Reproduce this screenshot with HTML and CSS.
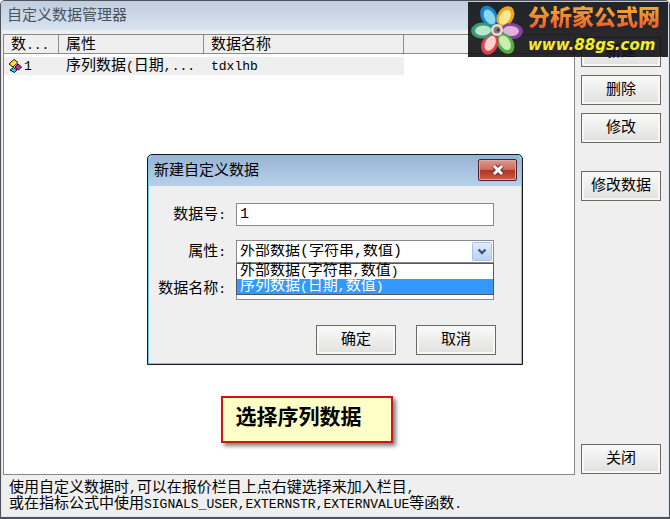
FILE: index.html
```html
<!DOCTYPE html>
<html lang="zh-CN">
<head>
  <meta charset="UTF-8" />
  <meta name="viewport" content="width=device-width, initial-scale=1.0" />
  <title>自定义数据管理器</title>
  <link rel="stylesheet" href="styles.css">
</head>
<body>
<div class="window">
  <h1 class="window-title">自定义数据管理器</h1>

  <div class="main">
    <!-- 数据列表 -->
    <div class="list">
      <table class="data-table">
        <thead>
          <tr>
            <th class="col-no">数<span class="en">...</span></th>
            <th class="col-type">属性</th>
            <th class="col-name">数据名称</th>
            <th></th>
          </tr>
        </thead>
        <tbody>
          <tr>
            <td class="cell-no">
              <svg class="row-icon" viewBox="0 0 14 14" width="14" height="14" aria-hidden="true">
                <path d="M6 0.5L10 3.5L5 8L1 5Z" fill="#f4e62c" stroke="#111"/>
                <path d="M10 5L13.500 8L10.500 11L7 8Z" fill="#e21bd0" stroke="#111"/>
                <path d="M5.500 8.500L9 11L6.500 13.500L2 11Z" fill="#22d4e8" stroke="#111"/>
              </svg>
              <span class="en">1</span>
            </td>
            <td>序列数据<span class="en">(</span>日期<span class="en">,...</span></td>
            <td><span class="en">tdxlhb</span></td>
            <td class="cell-empty"></td>
          </tr>
        </tbody>
      </table>
    </div>

    <!-- 右侧按钮 -->
    <div class="sidebar">
      <button type="button" class="btn">新建</button>
      <button type="button" class="btn">删除</button>
      <button type="button" class="btn">修改</button>
      <button type="button" class="btn btn-data">修改数据</button>
      <button type="button" class="btn btn-close">关闭</button>
    </div>
  </div>

  <p class="help">使用自定义数据时<span class="en">,</span>可以在报价栏目上点右键选择来加入栏目<span class="en">,</span><br>
  或在指标公式中使用<span class="en">SIGNALS_USER,EXTERNSTR,EXTERNVALUE</span>等函数<span class="en">.</span></p>

  <!-- 新建对话框 -->
  <form class="dialog">
    <div class="dialog-head">
      <h2 class="dialog-title">新建自定义数据</h2>
      <button type="button" class="dialog-x" aria-label="关闭">
        <svg viewBox="0 0 14 12" width="14" height="12" aria-hidden="true">
          <path d="M3 2L11 10M11 2L3 10" stroke="#5b3038" stroke-width="5"/>
          <path d="M3 2L11 10M11 2L3 10" stroke="#fff" stroke-width="3"/>
        </svg>
      </button>
    </div>
    <div class="fields">
      <label for="no">数据号<span class="en">:</span></label>
      <input id="no" class="field" type="text" value="1">

      <label for="type">属性<span class="en">:</span></label>
      <div class="combo">
        <select id="type" class="field">
          <option>外部数据(字符串,数值)</option>
          <option>序列数据(日期,数值)</option>
        </select>
        <svg class="combo-arrow" viewBox="0 0 20 19" width="20" height="19" aria-hidden="true">
          <defs>
            <linearGradient id="arrow-bg" x2="0" y2="1">
              <stop offset="0" stop-color="#e3edfc"/>
              <stop offset="1" stop-color="#b9d0f5"/>
            </linearGradient>
          </defs>
          <rect x="0.5" y="0.5" width="19" height="18" rx="1" fill="url(#arrow-bg)" stroke="#a9c1ea"/>
          <path d="M6.500 7.500L10 11L13.500 7.500" fill="none" stroke="#41566f" stroke-width="2.400"/>
        </svg>
        <ul class="combo-list" role="listbox" aria-label="属性选项">
          <li role="option">外部数据<span class="en">(</span>字符串<span class="en">,</span>数值<span class="en">)</span></li>
          <li role="option" class="active" aria-selected="true">序列数据<span class="en">(</span>日期<span class="en">,</span>数值<span class="en">)</span></li>
        </ul>
      </div>

      <label for="name">数据名称<span class="en">:</span></label>
      <input id="name" class="field" type="text">
    </div>
    <div class="actions">
      <button type="button" class="btn">确定</button>
      <button type="button" class="btn">取消</button>
    </div>
  </form>

  <div class="note">选择序列数据</div>

  <!-- 网站标志 -->
  <div class="logo">
    <svg class="flower" viewBox="0 0 54 52" width="54" height="52" aria-hidden="true">
      <g transform="translate(27 26)">
        <g transform="rotate(-30)"><ellipse cy="-16" rx="8" ry="11" fill="#1687c8"/><ellipse cy="-15" rx="5" ry="8" fill="#8cd6f2"/></g>
        <g transform="rotate(32)"><ellipse cy="-16" rx="8" ry="11" fill="#efa51c"/><ellipse cy="-15" rx="5" ry="8" fill="#fbe78d"/></g>
        <g transform="rotate(94)"><ellipse cy="-15" rx="8" ry="11" fill="#83429b"/><ellipse cy="-14" rx="5" ry="8" fill="#e0b2de"/></g>
        <g transform="rotate(148)"><ellipse cy="-16" rx="8" ry="11" fill="#54ad45"/><ellipse cy="-15" rx="5" ry="8" fill="#c9edae"/></g>
        <g transform="rotate(207)"><ellipse cy="-16" rx="8" ry="11" fill="#dd4050"/><ellipse cy="-15" rx="5" ry="8" fill="#ffd0ce"/></g>
        <g transform="rotate(268)"><ellipse cy="-15" rx="8" ry="11" fill="#3d9873"/><ellipse cy="-14" rx="5" ry="8" fill="#b6e6cb"/></g>
        <circle r="6" fill="#e8ded8"/>
        <circle r="3.500" fill="#8d7770"/>
        <circle cx="1" cy="0" r="1.500" fill="#4a3634"/>
      </g>
    </svg>
    <div class="logo-text">
      <span class="logo-name">分析家公式网</span>
      <span class="logo-url">www.88gs.com</span>
    </div>
  </div>
</div>
</body>
</html>
```
FILE: styles.css
```css
* {
  box-sizing: border-box;
}

body {
  margin: 0;
  background: #fff;
  color: #000;
  font-family: "Liberation Mono", "Noto Sans CJK SC", monospace;
  font-size: 15px;
  line-height: 15px;
}

button,
input,
select {
  font: inherit;
  color: inherit;
}

.en {
  font-size: 13px;
}

/* 主窗口 */
.window {
  position: relative;
  display: flex;
  flex-direction: column;
  min-height: 100vh;
  border: 1px solid #50535c;
  border-bottom-width: 2px;
  border-radius: 5px 5px 0 0;
  background: #efefef;
  box-shadow: inset 0 0 0 1px #dbe5f0;
}

.window-title {
  margin: 0;
  padding: 2px 6px 0;
  border-radius: 4px 4px 0 0;
  background: linear-gradient(#c0cddd, #d8e3f0);
  color: #4a525c;
  font-size: 15px;
  font-weight: normal;
  line-height: 27px;
}

.main {
  flex: 1;
  display: flex;
  gap: 6px;
  padding: 4px 8px 0 2px;
}

/* 列表 */
.list {
  flex: 1;
  border: 1px solid #85888a;
  background: #fff;
}

.data-table {
  width: 100%;
  table-layout: fixed;
  border-collapse: separate;
  border-spacing: 0;
  text-align: left;
  white-space: nowrap;
}

.data-table th {
  height: 19px;
  padding: 2px 7px 0;
  border-right: 1px solid #8d8d8d;
  border-bottom: 1px solid #8d8d8d;
  background: #efefef;
  font-weight: normal;
}

.data-table th:last-child {
  border-right: 0;
}

.data-table td {
  height: 21px;
  padding: 1px 7px 0;
  border-top: 3px solid #fff;
  background: #efefef;
}

.data-table .cell-empty {
  background: #fff;
}

.data-table .col-no {
  width: 55px;
}

.data-table .col-type {
  width: 145px;
}

.data-table .col-name {
  width: 200px;
}

.data-table .cell-no {
  display: flex;
  align-items: center;
  gap: 2px;
  padding: 0 4px;
}

/* 按钮 */
.sidebar {
  display: flex;
  flex-direction: column;
  gap: 8px;
  padding-top: 3px;
  padding-bottom: 1px;
}

.btn {
  width: 80px;
  height: 30px;
  padding: 0;
  border: 1px solid #6b6b66;
  background: linear-gradient(#fafafa, #e0e0df);
  box-shadow: inset 0 0 0 2px #f7f7f7;
}

.btn-data {
  margin-top: 20px;
}

.btn-close {
  margin-top: auto;
}

.help {
  margin: 0;
  padding: 6px 8px 4px;
  line-height: 16px;
}

/* 对话框 */
.dialog {
  position: absolute;
  top: 153px;
  left: 50%;
  width: 376px;
  transform: translateX(-50%);
  border: 1px solid #15191f;
  border-radius: 5px 5px 0 0;
  background: #efefef;
  box-shadow: inset 0 0 0 1px #70c9e6;
}

.dialog-head {
  display: flex;
  justify-content: space-between;
  align-items: flex-start;
  margin: 1px;
  padding: 3px 4px 2px 5px;
  border-radius: 4px 4px 0 0;
  background: linear-gradient(#98b4d5, #b8d0ea);
}

.dialog-title {
  margin: 0;
  font-size: 15px;
  font-weight: normal;
  line-height: 25px;
}

.dialog-x {
  display: flex;
  align-items: center;
  justify-content: center;
  width: 39px;
  height: 22px;
  padding: 0;
  border: 1px solid #50202a;
  border-radius: 2px;
  background: linear-gradient(#dc9a8e, #cd6a59 48%, #b52f20 50%, #cd6048);
  box-shadow: inset 0 0 0 1px #e6a699;
}

.fields {
  display: grid;
  grid-template-columns: 78px 1fr;
  gap: 14px 10px;
  align-items: center;
  padding: 16px 28px 0 0;
}

.fields label {
  padding-top: 2px;
  text-align: right;
}

.field {
  display: block;
  width: 100%;
  height: 23px;
  padding: 0 3px;
  border: 1px solid #8a8a8a;
  border-radius: 0;
  background: #fff;
  appearance: none;
  outline: 0;
}

.combo {
  position: relative;
}

.combo-arrow {
  position: absolute;
  top: 2px;
  right: 2px;
  pointer-events: none;
}

.combo-list {
  position: absolute;
  top: 100%;
  left: 0;
  width: 100%;
  margin: 0;
  padding: 0;
  border: 1px solid #555;
  background: #fff;
  list-style: none;
}

.combo-list li {
  padding: 0 3px;
}

.combo-list .active {
  background: #3399ff;
  color: #fff;
}

.actions {
  display: flex;
  justify-content: flex-end;
  gap: 20px;
  padding: 25px 26px 9px;
}

/* 提示 */
.note {
  position: absolute;
  top: 395px;
  left: 33%;
  padding: 11px 30px 12px 12px;
  border: 2px solid #cf1515;
  background: #ffffc8;
  box-shadow: 3px 3px 4px rgba(0, 0, 0, 0.5);
  font-size: 21px;
  font-weight: bold;
  line-height: 20px;
}

/* 标志 */
.logo {
  position: absolute;
  top: 1px;
  right: 1px;
  display: flex;
  align-items: center;
  gap: 4px;
  width: 200px;
  height: 55px;
  padding-left: 2px;
  background: rgba(18, 18, 22, 0.9);
}

.logo-text {
  display: flex;
  flex-direction: column;
  gap: 1px;
}

.logo-name {
  background: linear-gradient(#f9b233, #e8402a);
  background-clip: text;
  -webkit-background-clip: text;
  color: transparent;
  font-size: 22px;
  font-weight: 900;
  line-height: 30px;
}

.logo-url {
  color: #f4ec2a;
  font-family: "DejaVu Sans", sans-serif;
  font-size: 15px;
  font-style: italic;
  font-weight: bold;
  line-height: 18px;
}
```
